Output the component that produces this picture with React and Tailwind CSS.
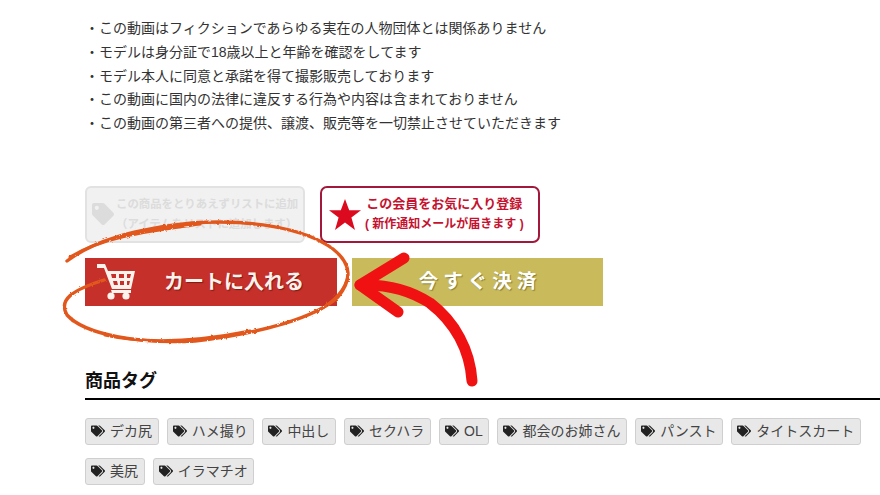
import React from 'react';
import { FaTags, FaTag } from 'react-icons/fa';

const notes = [
  'この動画はフィクションであらゆる実在の人物団体とは関係ありません',
  'モデルは身分証で18歳以上と年齢を確認をしてます',
  'モデル本人に同意と承諾を得て撮影販売しております',
  'この動画に国内の法律に違反する行為や内容は含まれておりません',
  'この動画の第三者への提供、譲渡、販売等を一切禁止させていただきます',
];

const tags = ['デカ尻', 'ハメ撮り', '中出し', 'セクハラ', 'OL', '都会のお姉さん', 'パンスト', 'タイトスカート', '美尻', 'イラマチオ'];

function CartIcon() {
  return (
    <svg viewBox="0 0 38 36" className="w-[38px] h-[36px] shrink-0" fill="#fdf3ec">
      <path d="M0 0h8l3 7h27l-4 18H15L7 4H0z" />
      <path d="M14 10h5v4h-4zM22 10h5v4h-5zM30 10h4l-1 4h-3zM16 17h4l1 4h-4zM23 17h4v4h-4zM30 17h3l-1 4h-2z" fill="#c6302b" />
      <path d="M14 26h20v3H15z" />
      <circle cx="14" cy="32" r="3.6" />
      <circle cx="29" cy="32" r="3.6" />
    </svg>
  );
}

export default function App() {
  return (
    <div className="relative w-[880px] h-[495px] overflow-hidden bg-white pl-[85px] pt-[17px] text-[#333] font-['Liberation_Sans','Noto_Sans_CJK_JP',sans-serif]">
      <ul className="text-[14px] leading-[23.8px]">
        {notes.map((note) => (
          <li key={note}>・{note}</li>
        ))}
      </ul>

      <div className="mt-[50px] flex gap-[15px]">
        <div className="w-[220px] h-[57px] flex items-center gap-[2px] pl-[5px] rounded-[6px] border-2 border-[#e2e2e2] bg-[#f1f1f1] text-[#dcdcdc] font-bold">
          <FaTag className="w-[22px] h-[22px] shrink-0" />
          <div className="text-[11.4px] leading-[20px] whitespace-nowrap">
            <div>この商品をとりあえずリストに追加</div>
            <div>（アイテムをリストに追加します）</div>
          </div>
        </div>
        <div className="w-[220px] h-[57px] flex items-center gap-[4px] pl-[7px] rounded-[7px] border-2 border-[#a3173a] bg-white text-[#c5122f] font-bold">
          <svg viewBox="0 0 32 31" className="w-[32px] h-[31px] shrink-0" fill="#dc0a1e">
            <path d="M16 0l4.2 11.2H32l-9.6 7.4L26 31l-10-7.5L6 31l3.6-12.4L0 11.2h11.8z" />
          </svg>
          <div className="text-center whitespace-nowrap">
            <div className="text-[13px] leading-[20px]">この会員をお気に入り登録</div>
            <div className="text-[12px] leading-[20px]">( 新作通知メールが届きます )</div>
          </div>
        </div>
      </div>

      <div className="mt-[15px] flex gap-[15px]">
        <div className="w-[252px] h-[48px] flex items-center pl-[12px] bg-[#c6302b] text-[#fdf3ec] font-bold">
          <CartIcon />
          <span className="ml-[29px] text-[20px] whitespace-nowrap [text-shadow:1px_1px_1px_#7d1a16]">カートに入れる</span>
        </div>
        <div className="w-[251px] h-[48px] flex items-center justify-center pl-[5px] bg-[#c9bb5c] text-white font-bold">
          <span className="text-[19.5px] tracking-[5px] whitespace-nowrap [text-shadow:1px_1px_1px_#8a7f35]">今すぐ決済</span>
        </div>
      </div>

      <h2 className="mt-[65px] h-[29px] border-b-2 border-black text-[18px] leading-[21px] font-bold text-[#111]">商品タグ</h2>

      <div className="mt-[18px] flex flex-wrap gap-x-2 gap-y-[13px] w-[795px]">
        {tags.map((tag) => (
          <span
            key={tag}
            className="h-[27px] flex items-center gap-[5px] pl-[5px] pr-[5.7px] rounded-[3px] border border-[#cfcfcf] bg-[#e8e8e8] text-[14px] text-[#444] whitespace-nowrap"
          >
            <FaTags className="w-[14px] h-[14px] text-[#222] shrink-0" />
            {tag}
          </span>
        ))}
      </div>

      {/* hand drawn marks over the buttons */}
      <svg viewBox="0 0 880 495" className="absolute inset-0 w-[880px] h-[495px] pointer-events-none" fill="none" strokeLinecap="round" strokeLinejoin="round">
        <defs>
          <filter id="rough" x="0" y="0" width="100%" height="100%" filterUnits="userSpaceOnUse">
            <feTurbulence type="fractalNoise" baseFrequency="0.35" numOctaves="2" seed="4" result="noise" />
            <feDisplacementMap in="SourceGraphic" in2="noise" scale="2.5" />
          </filter>
        </defs>
        <g stroke="#e2581f" filter="url(#rough)">
          <path d="M67 261C95 240 135 229 192 223C250 219 305 228 333 249C352 264 352 280 338 297C315 318 262 333 195 341C140 344 85 335 67 315C58 300 72 290 104 280" strokeWidth="3.4" />
          <path d="M70 257C105 236 150 231 200 224" strokeWidth="3" />
          <path d="M105 335C150 345 200 341 250 331" strokeWidth="3" />
          <path d="M320 310C335 300 345 290 348 275" strokeWidth="2.5" />
        </g>
        <path d="M472 381C470 350 455 322 430 303C410 290 385 284 360 285" stroke="#f01212" strokeWidth="11" />
        <path d="M404 258L360 285L398 312" stroke="#f01212" strokeWidth="11" />
      </svg>
    </div>
  );
}
